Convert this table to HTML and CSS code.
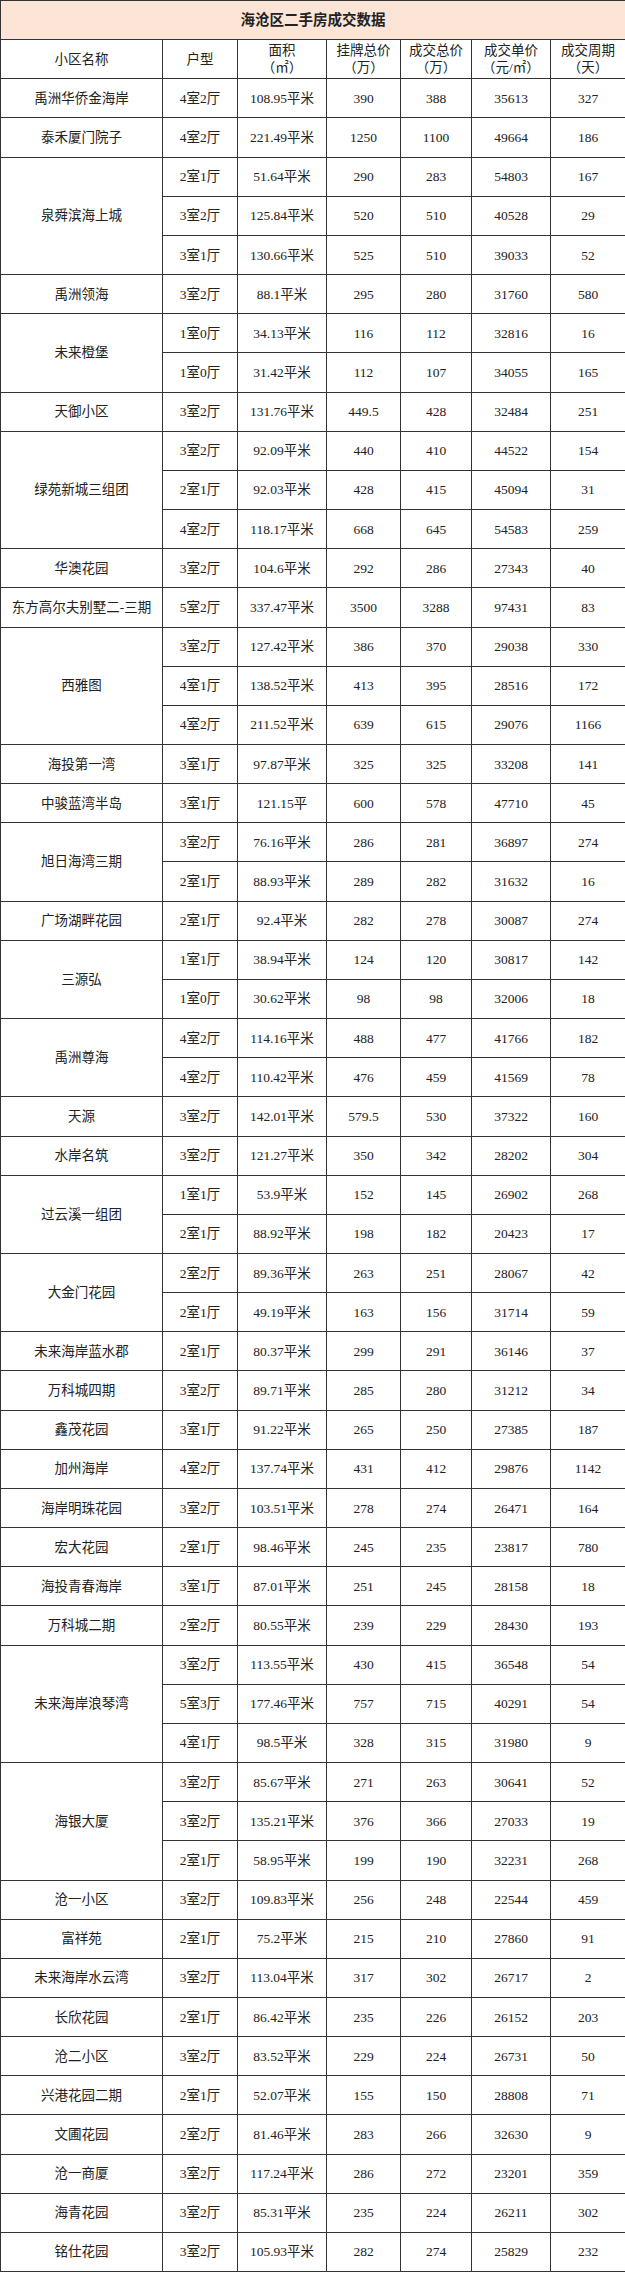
FILE: index.html
```html
<!DOCTYPE html>
<html lang="zh-CN">
<head>
<meta charset="utf-8">
<title>海沧区二手房成交数据</title>
<link rel="stylesheet" href="styles.css">
</head>
<body>
<table class="sheet">
  <colgroup>
    <col class="c-name"><col class="c-type"><col class="c-area"><col class="c-list"><col class="c-deal"><col class="c-unit"><col class="c-days">
  </colgroup>
  <tr class="title-row"><td class="title" colspan="7">海沧区二手房成交数据</td></tr>
  <tr class="head">
    <td>小区名称</td><td>户型</td><td>面积<br>（㎡）</td><td>挂牌总价<br>（万）</td><td>成交总价<br>（万）</td><td>成交单价<br>（元/㎡）</td><td>成交周期<br>（天）</td>
  </tr>
  <tr><td>禹洲华侨金海岸</td><td>4室2厅</td><td>108.95平米</td><td>390</td><td>388</td><td>35613</td><td>327</td></tr>
  <tr><td>泰禾厦门院子</td><td>4室2厅</td><td>221.49平米</td><td>1250</td><td>1100</td><td>49664</td><td>186</td></tr>
  <tr><td rowspan="3">泉舜滨海上城</td><td>2室1厅</td><td>51.64平米</td><td>290</td><td>283</td><td>54803</td><td>167</td></tr>
  <tr><td>3室2厅</td><td>125.84平米</td><td>520</td><td>510</td><td>40528</td><td>29</td></tr>
  <tr><td>3室1厅</td><td>130.66平米</td><td>525</td><td>510</td><td>39033</td><td>52</td></tr>
  <tr><td>禹洲领海</td><td>3室2厅</td><td>88.1平米</td><td>295</td><td>280</td><td>31760</td><td>580</td></tr>
  <tr><td rowspan="2">未来橙堡</td><td>1室0厅</td><td>34.13平米</td><td>116</td><td>112</td><td>32816</td><td>16</td></tr>
  <tr><td>1室0厅</td><td>31.42平米</td><td>112</td><td>107</td><td>34055</td><td>165</td></tr>
  <tr><td>天御小区</td><td>3室2厅</td><td>131.76平米</td><td>449.5</td><td>428</td><td>32484</td><td>251</td></tr>
  <tr><td rowspan="3">绿苑新城三组团</td><td>3室2厅</td><td>92.09平米</td><td>440</td><td>410</td><td>44522</td><td>154</td></tr>
  <tr><td>2室1厅</td><td>92.03平米</td><td>428</td><td>415</td><td>45094</td><td>31</td></tr>
  <tr><td>4室2厅</td><td>118.17平米</td><td>668</td><td>645</td><td>54583</td><td>259</td></tr>
  <tr><td>华澳花园</td><td>3室2厅</td><td>104.6平米</td><td>292</td><td>286</td><td>27343</td><td>40</td></tr>
  <tr><td>东方高尔夫别墅二-三期</td><td>5室2厅</td><td>337.47平米</td><td>3500</td><td>3288</td><td>97431</td><td>83</td></tr>
  <tr><td rowspan="3">西雅图</td><td>3室2厅</td><td>127.42平米</td><td>386</td><td>370</td><td>29038</td><td>330</td></tr>
  <tr><td>4室1厅</td><td>138.52平米</td><td>413</td><td>395</td><td>28516</td><td>172</td></tr>
  <tr><td>4室2厅</td><td>211.52平米</td><td>639</td><td>615</td><td>29076</td><td>1166</td></tr>
  <tr><td>海投第一湾</td><td>3室1厅</td><td>97.87平米</td><td>325</td><td>325</td><td>33208</td><td>141</td></tr>
  <tr><td>中骏蓝湾半岛</td><td>3室1厅</td><td>121.15平</td><td>600</td><td>578</td><td>47710</td><td>45</td></tr>
  <tr><td rowspan="2">旭日海湾三期</td><td>3室2厅</td><td>76.16平米</td><td>286</td><td>281</td><td>36897</td><td>274</td></tr>
  <tr><td>2室1厅</td><td>88.93平米</td><td>289</td><td>282</td><td>31632</td><td>16</td></tr>
  <tr><td>广场湖畔花园</td><td>2室1厅</td><td>92.4平米</td><td>282</td><td>278</td><td>30087</td><td>274</td></tr>
  <tr><td rowspan="2">三源弘</td><td>1室1厅</td><td>38.94平米</td><td>124</td><td>120</td><td>30817</td><td>142</td></tr>
  <tr><td>1室0厅</td><td>30.62平米</td><td>98</td><td>98</td><td>32006</td><td>18</td></tr>
  <tr><td rowspan="2">禹洲尊海</td><td>4室2厅</td><td>114.16平米</td><td>488</td><td>477</td><td>41766</td><td>182</td></tr>
  <tr><td>4室2厅</td><td>110.42平米</td><td>476</td><td>459</td><td>41569</td><td>78</td></tr>
  <tr><td>天源</td><td>3室2厅</td><td>142.01平米</td><td>579.5</td><td>530</td><td>37322</td><td>160</td></tr>
  <tr><td>水岸名筑</td><td>3室2厅</td><td>121.27平米</td><td>350</td><td>342</td><td>28202</td><td>304</td></tr>
  <tr><td rowspan="2">过云溪一组团</td><td>1室1厅</td><td>53.9平米</td><td>152</td><td>145</td><td>26902</td><td>268</td></tr>
  <tr><td>2室1厅</td><td>88.92平米</td><td>198</td><td>182</td><td>20423</td><td>17</td></tr>
  <tr><td rowspan="2">大金门花园</td><td>2室2厅</td><td>89.36平米</td><td>263</td><td>251</td><td>28067</td><td>42</td></tr>
  <tr><td>2室1厅</td><td>49.19平米</td><td>163</td><td>156</td><td>31714</td><td>59</td></tr>
  <tr><td>未来海岸蓝水郡</td><td>2室1厅</td><td>80.37平米</td><td>299</td><td>291</td><td>36146</td><td>37</td></tr>
  <tr><td>万科城四期</td><td>3室2厅</td><td>89.71平米</td><td>285</td><td>280</td><td>31212</td><td>34</td></tr>
  <tr><td>鑫茂花园</td><td>3室1厅</td><td>91.22平米</td><td>265</td><td>250</td><td>27385</td><td>187</td></tr>
  <tr><td>加州海岸</td><td>4室2厅</td><td>137.74平米</td><td>431</td><td>412</td><td>29876</td><td>1142</td></tr>
  <tr><td>海岸明珠花园</td><td>3室2厅</td><td>103.51平米</td><td>278</td><td>274</td><td>26471</td><td>164</td></tr>
  <tr><td>宏大花园</td><td>2室1厅</td><td>98.46平米</td><td>245</td><td>235</td><td>23817</td><td>780</td></tr>
  <tr><td>海投青春海岸</td><td>3室1厅</td><td>87.01平米</td><td>251</td><td>245</td><td>28158</td><td>18</td></tr>
  <tr><td>万科城二期</td><td>2室2厅</td><td>80.55平米</td><td>239</td><td>229</td><td>28430</td><td>193</td></tr>
  <tr><td rowspan="3">未来海岸浪琴湾</td><td>3室2厅</td><td>113.55平米</td><td>430</td><td>415</td><td>36548</td><td>54</td></tr>
  <tr><td>5室3厅</td><td>177.46平米</td><td>757</td><td>715</td><td>40291</td><td>54</td></tr>
  <tr><td>4室1厅</td><td>98.5平米</td><td>328</td><td>315</td><td>31980</td><td>9</td></tr>
  <tr><td rowspan="3">海银大厦</td><td>3室2厅</td><td>85.67平米</td><td>271</td><td>263</td><td>30641</td><td>52</td></tr>
  <tr><td>3室2厅</td><td>135.21平米</td><td>376</td><td>366</td><td>27033</td><td>19</td></tr>
  <tr><td>2室1厅</td><td>58.95平米</td><td>199</td><td>190</td><td>32231</td><td>268</td></tr>
  <tr><td>沧一小区</td><td>3室2厅</td><td>109.83平米</td><td>256</td><td>248</td><td>22544</td><td>459</td></tr>
  <tr><td>富祥苑</td><td>2室1厅</td><td>75.2平米</td><td>215</td><td>210</td><td>27860</td><td>91</td></tr>
  <tr><td>未来海岸水云湾</td><td>3室2厅</td><td>113.04平米</td><td>317</td><td>302</td><td>26717</td><td>2</td></tr>
  <tr><td>长欣花园</td><td>2室1厅</td><td>86.42平米</td><td>235</td><td>226</td><td>26152</td><td>203</td></tr>
  <tr><td>沧二小区</td><td>3室2厅</td><td>83.52平米</td><td>229</td><td>224</td><td>26731</td><td>50</td></tr>
  <tr><td>兴港花园二期</td><td>2室1厅</td><td>52.07平米</td><td>155</td><td>150</td><td>28808</td><td>71</td></tr>
  <tr><td>文圃花园</td><td>2室2厅</td><td>81.46平米</td><td>283</td><td>266</td><td>32630</td><td>9</td></tr>
  <tr><td>沧一商厦</td><td>3室2厅</td><td>117.24平米</td><td>286</td><td>272</td><td>23201</td><td>359</td></tr>
  <tr><td>海青花园</td><td>3室2厅</td><td>85.31平米</td><td>235</td><td>224</td><td>26211</td><td>302</td></tr>
  <tr><td>铭仕花园</td><td>3室2厅</td><td>105.93平米</td><td>282</td><td>274</td><td>25829</td><td>232</td></tr>
</table>
</body>
</html>
```
FILE: styles.css
```css
html, body {
  margin: 0;
  padding: 0;
  background: #ffffff;
}

.sheet {
  width: 625px;
  border-collapse: collapse;
  table-layout: fixed;
  font-family: "Liberation Serif", "Noto Sans CJK SC", serif;
  font-size: 13.5px;
  color: #222222;
}

.c-name { width: 162px; }
.c-type { width: 75px; }
.c-area { width: 89px; }
.c-list { width: 74px; }
.c-deal { width: 71px; }
.c-unit { width: 79px; }
.c-days { width: 75px; }

.sheet tr {
  height: 39.16px;
}

.sheet td {
  border: 1px solid #333333;
  padding: 0;
  text-align: center;
  vertical-align: middle;
  white-space: nowrap;
  line-height: 17px;
}

.sheet .title {
  background: #fce4d6;
  font-weight: bold;
  font-size: 14.5px;
}

.sheet .head td {
  line-height: 17px;
}
```
